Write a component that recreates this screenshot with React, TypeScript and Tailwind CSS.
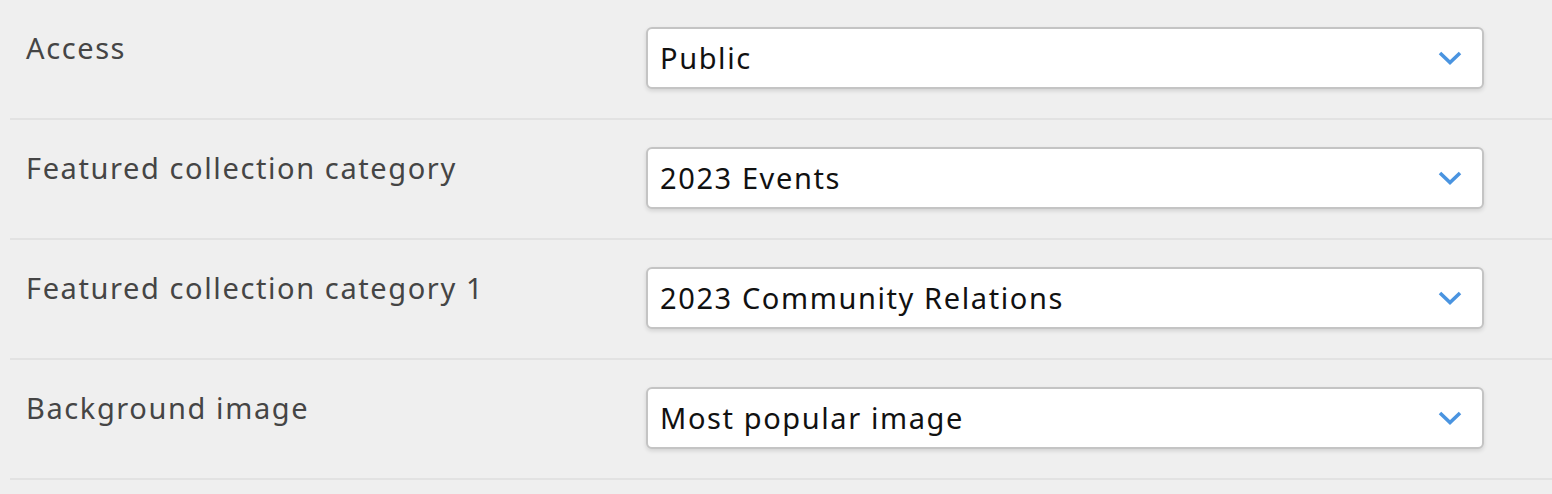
import React from "react";

const rows = [
  { label: "Access", value: "Public" },
  { label: "Featured collection category", value: "2023 Events" },
  { label: "Featured collection category 1", value: "2023 Community Relations" },
  { label: "Background image", value: "Most popular image" },
];

function Chevron() {
  return (
    <svg width="24" height="16" viewBox="0 0 24 16" className="shrink-0">
      <polyline points="2,3 12,12.5 22,3" fill="none" stroke="#4a94e0" strokeWidth="3.6" />
    </svg>
  );
}

export default function App() {
  return (
    <div className="min-h-[494px] w-full bg-[#efefef] pl-[10px]" style={{ fontFamily: '"Noto Sans", sans-serif' }}>
      {rows.map((row) => (
        <div key={row.label} className="flex border-b-2 border-[#e2e2e2] pt-[27px] pb-[29px] pl-[16px] pr-[68px]">
          <div className="mt-[6px] w-[620px] shrink-0 text-[29px] leading-[29px] tracking-[1.6px] text-[#454545]">{row.label}</div>
          <div className="flex h-[62px] flex-1 items-center justify-between rounded-[6px] border-2 border-[#c4c4c4] bg-white pl-[12px] pr-[20px] text-[29px] tracking-[1.6px] text-[#111] shadow-[0_2px_4px_rgba(0,0,0,0.12)]">
            <span>{row.value}</span>
            <Chevron />
          </div>
        </div>
      ))}
    </div>
  );
}
